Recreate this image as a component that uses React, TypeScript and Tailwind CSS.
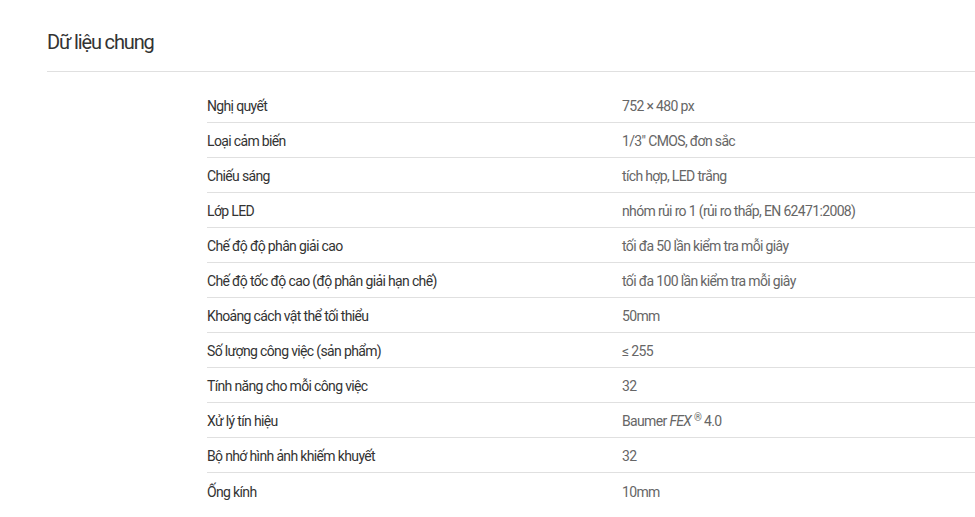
const rows: [string, React.ReactNode][] = [
  ['Nghị quyết', '752 × 480 px'],
  ['Loại cảm biến', '1/3" CMOS, đơn sắc'],
  ['Chiếu sáng', 'tích hợp, LED trắng'],
  ['Lớp LED', 'nhóm rủi ro 1 (rủi ro thấp, EN 62471:2008)'],
  ['Chế độ độ phân giải cao', 'tối đa 50 lần kiểm tra mỗi giây'],
  ['Chế độ tốc độ cao (độ phân giải hạn chế)', 'tối đa 100 lần kiểm tra mỗi giây'],
  ['Khoảng cách vật thể tối thiểu', '50mm'],
  ['Số lượng công việc (sản phẩm)', '≤ 255'],
  ['Tính năng cho mỗi công việc', '32'],
  [
    'Xử lý tín hiệu',
    <>
      Baumer <i>FEX</i> <sup className="text-[10px]">®</sup> 4.0
    </>,
  ],
  ['Bộ nhớ hình ảnh khiếm khuyết', '32'],
  ['Ống kính', '10mm'],
];

export default function App() {
  return (
    <div className="min-h-[517px] bg-white pl-[47px] pt-[28px] font-['Roboto',sans-serif]">
      <h2 className="text-[20px] leading-[28px] tracking-[-1.15px] text-[#333] pb-[15px] border-b border-[#e0e0e0]">
        Dữ liệu chung
      </h2>
      <div className="ml-[160px] mt-[16px]">
        {rows.map(([label, value], i) => (
          <div
            key={i}
            className={`flex h-[35px] items-center pt-[3px] text-[14px] tracking-[-0.65px] ${i < rows.length - 1 ? 'border-b border-[#e0e0e0]' : ''}`}
          >
            <div className="w-[415px] text-[#333]">{label}</div>
            <div className="text-[#666]">{value}</div>
          </div>
        ))}
      </div>
    </div>
  );
}
